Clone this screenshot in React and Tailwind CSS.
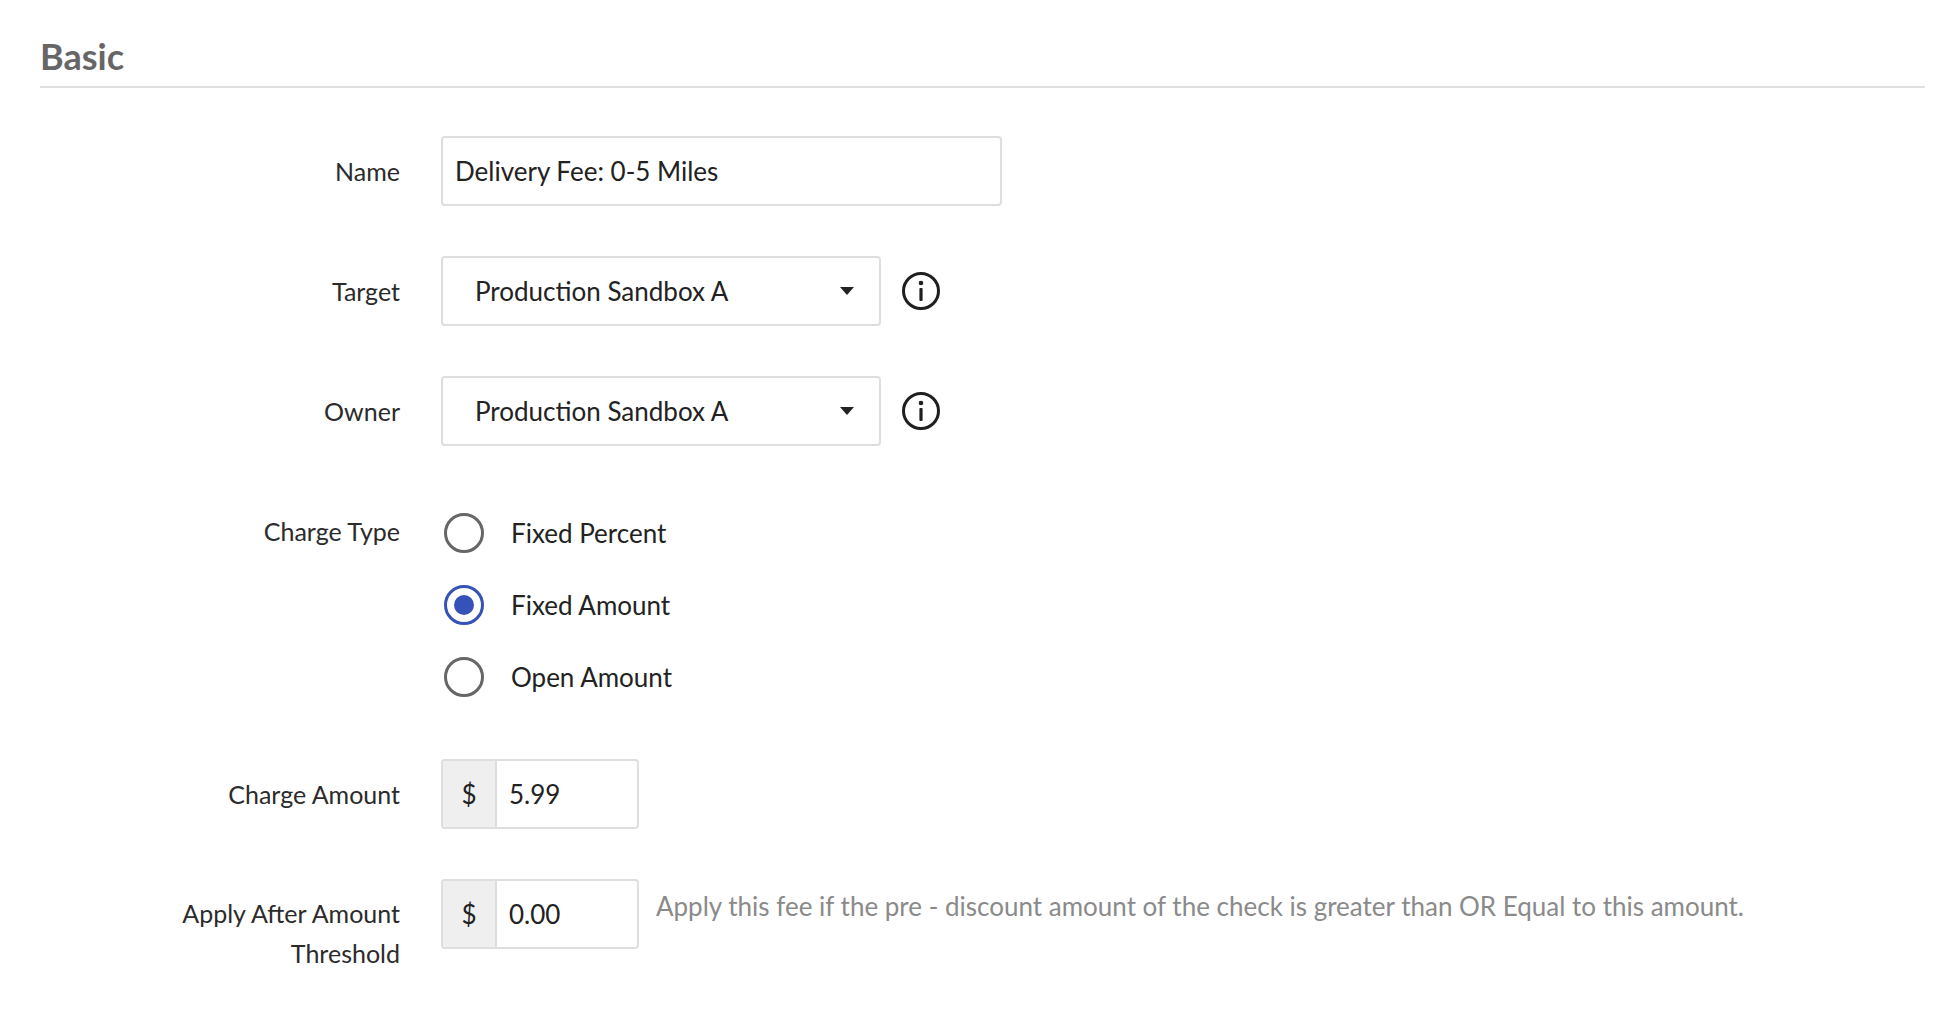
import React from "react";

const Info = () => (
  <svg width="40" height="40" viewBox="0 0 40 40" className="ml-5 shrink-0">
    <circle cx="20" cy="20" r="17.5" fill="none" stroke="#1f1f1f" strokeWidth="3" />
    <circle cx="20" cy="12" r="2.3" fill="#1f1f1f" />
    <rect x="18.4" y="17" width="3.2" height="13" rx="1" fill="#1f1f1f" />
  </svg>
);

const Caret = () => (
  <svg width="16" height="10" viewBox="0 0 16 10"><path d="M1 1h14L8 9z" fill="#222" /></svg>
);

const Label = ({ children }) => (
  <div className="w-[360px] shrink-0 text-right pr-0 text-[25px] leading-[40px] text-[#2b2b2b]">{children}</div>
);

const Select = () => (
  <div className="ml-[41px] w-[440px] h-[70px] border-2 border-[#dedede] rounded-[4px] flex items-center justify-between pl-8 pr-6 text-[26px] text-[#222]">
    <span>Production Sandbox A</span>
    <Caret />
  </div>
);

const Radio = ({ checked, label }) => (
  <div className="flex items-center h-[72px]">
    <div className={`w-[40px] h-[40px] rounded-full border-[3px] flex items-center justify-center ${checked ? "border-[#3552b8]" : "border-[#666]"}`}>
      {checked && <div className="w-[20px] h-[20px] rounded-full bg-[#3552b8]" />}
    </div>
    <span className="ml-[27px] text-[26px] text-[#222]">{label}</span>
  </div>
);

const Money = ({ v }) => (
  <div className="ml-[41px] flex w-[198px] h-[70px] border-2 border-[#dedede] rounded-[4px] overflow-hidden shrink-0">
    <div className="w-[54px] bg-[#efefef] border-r-2 border-[#dedede] flex items-center justify-center text-[26px] text-[#222]">$</div>
    <div className="flex items-center pl-3 text-[26px] text-[#222]">{v}</div>
  </div>
);

export default function App() {
  return (
    <div className="w-[1954px] h-[1028px] bg-white pl-[40px] pr-[29px] pt-[34px]" style={{ fontFamily: "Lato, 'Noto Sans', sans-serif" }}>
      <div className="text-[36px] font-bold text-[#666] leading-[44px]">Basic</div>
      <div className="mt-[8px] border-t-2 border-[#e0e0e0]" />
      <div className="flex items-center mt-[48px]">
        <Label>Name</Label>
        <div className="ml-[41px] w-[561px] h-[70px] border-2 border-[#dedede] rounded-[4px] flex items-center pl-[12px] text-[26px] text-[#222]">Delivery Fee: 0-5 Miles</div>
      </div>
      <div className="flex items-center mt-[50px]">
        <Label>Target</Label>
        <Select />
        <Info />
      </div>
      <div className="flex items-center mt-[50px]">
        <Label>Owner</Label>
        <Select />
        <Info />
      </div>
      <div className="flex mt-[51px]">
        <Label><div className="mt-[14px]">Charge Type</div></Label>
        <div className="ml-[44px] flex flex-col">
          <Radio label="Fixed Percent" />
          <Radio checked label="Fixed Amount" />
          <Radio label="Open Amount" />
        </div>
      </div>
      <div className="flex items-center mt-[46px]">
        <Label>Charge Amount</Label>
        <Money v="5.99" />
      </div>
      <div className="flex items-start mt-[50px]">
        <Label><div className="mt-[14px]">Apply After Amount<br />Threshold</div></Label>
        <Money v="0.00" />
        <div className="ml-[17px] mt-[8px] text-[26px] text-[#8a8a8a]">Apply this fee if the pre - discount amount of the check is greater than OR Equal to this amount.</div>
      </div>
    </div>
  );
}
